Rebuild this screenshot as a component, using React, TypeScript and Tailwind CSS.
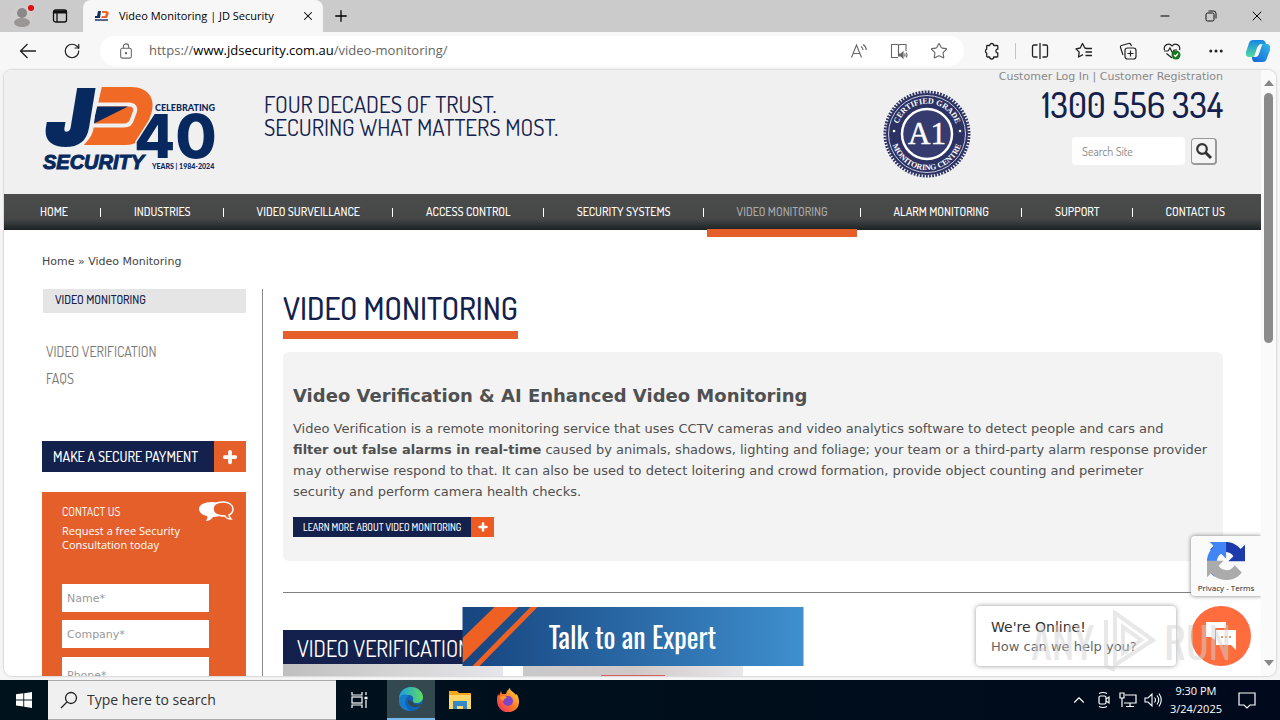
import React from "react";
import { ChevronUp, Ellipsis, Minus, Plus, RotateCw, Star, X } from "lucide-react";

const narrow = "font-['Dosis','Liberation_Sans_Narrow','Roboto_Condensed',sans-serif]";
const poster = "font-['Oswald','Roboto_Condensed','Liberation_Sans_Narrow',sans-serif]";
const verdana = "font-['DejaVu_Sans',sans-serif]";
const segoe = "font-['Open_Sans','Noto_Sans',sans-serif]";

function FavIcon() {
  return (
    <svg viewBox="0 0 14 12" className="h-3 w-3.5" aria-hidden="true">
      <path d="M3 1h3L5 8H0V6h2z" fill="#14305f" />
      <path d="M7 1h5l2 2-2 5H6l1-2h3l1-3H7z" fill="#ee6529" />
      <path d="M0 10h13" stroke="#56668c" strokeWidth="2" />
    </svg>
  );
}

function TabBar() {
  return (
    <div className="flex h-8 shrink-0 bg-[#cbcbcb]">
      <button aria-label="Profile" className="flex w-11 items-center justify-center">
        <svg viewBox="0 0 24 24" className="h-6 w-6">
          <circle cx="12" cy="12" r="11" fill="#d0cdcc" />
          <circle cx="12" cy="9" r="5" fill="#8c8887" />
          <ellipse cx="12" cy="18.500" rx="8" ry="4.500" fill="#9a9696" />
          <circle cx="21" cy="4" r="3" fill="#e00b14" />
        </svg>
      </button>
      <button aria-label="Tab actions" className="flex w-8 items-center justify-center">
        <svg viewBox="0 0 16 16" className="h-4 w-4" fill="none" stroke="#111" strokeWidth="1.3">
          <rect x="1.5" y="2" width="13" height="12" rx="2" />
          <path d="M1.5 4h13" strokeWidth="3" />
          <path d="M5 4v10" />
        </svg>
      </button>
      <div className={`ml-[7px] flex w-60 items-center rounded-t-lg bg-[#f7f7f7] pl-3 pr-2 text-[11px] text-black ${segoe}`}>
        <FavIcon />
        <span className="ml-2.5 whitespace-nowrap">Video Monitoring | JD Security</span>
        <button aria-label="Close tab" className="ml-auto">
          <X className="h-3.5 w-3.5" strokeWidth={1.8} />
        </button>
      </div>
      <button aria-label="New tab" className="flex w-9 items-center justify-center">
        <Plus className="h-[18px] w-[18px]" strokeWidth={1.7} />
      </button>
      <div className="ml-auto flex">
        <button aria-label="Minimize" className="flex w-[46px] items-center justify-center">
          <Minus className="h-3.5 w-3.5" strokeWidth={1.8} />
        </button>
        <button aria-label="Restore" className="flex w-[46px] items-center justify-center">
          <svg viewBox="0 0 12 12" className="h-3 w-3" fill="none" stroke="#111">
            <rect x="1" y="3" width="8" height="8" rx="1.5" />
            <path d="M3.500 1h5a2.500 2.500 0 0 1 2.500 2.500v5" />
          </svg>
        </button>
        <button aria-label="Close window" className="flex w-[46px] items-center justify-center">
          <X className="h-4 w-4" strokeWidth={1.5} />
        </button>
      </div>
    </div>
  );
}

function Toolbar() {
  return (
    <div className={`flex h-[38px] shrink-0 items-center bg-[#f7f7f7] text-[#222] ${segoe}`}>
      <button aria-label="Back" className="ml-4 flex w-6 justify-center">
        <svg viewBox="0 0 18 16" className="h-4 w-[18px]" fill="none" stroke="#222" strokeWidth="1.3">
          <path d="M17 8H1.500M8.500 1l-7 7 7 7" />
        </svg>
      </button>
      <button aria-label="Refresh" className="ml-5 flex w-6 justify-center">
        <RotateCw className="h-[18px] w-[18px]" strokeWidth={1.6} />
      </button>
      <div className="ml-4 flex h-[30px] min-w-0 flex-1 items-center rounded-full bg-white pl-[18px] pr-4 text-[#666]">
        <svg viewBox="0 0 16 18" className="h-4 w-4" fill="none" stroke="#666" strokeWidth="1.2">
          <rect x="2" y="6" width="12" height="11" rx="2" />
          <path d="M5 6V4a3 3 0 0 1 6 0v2" />
          <circle cx="8" cy="11.500" r=".7" fill="#666" />
        </svg>
        <span className="ml-[15px] text-[13px]">
          https://<span className="text-black">www.jdsecurity.com.au</span>/video-monitoring/
        </span>
        <div className="ml-auto flex items-center gap-[22px]">
          <button aria-label="Read aloud">
            <svg viewBox="0 0 18 16" className="h-4 w-[18px]" fill="none" stroke="#666" strokeWidth="1.1">
              <path d="M1.500 14.500 6.500 2l5 12.500M3.200 10.500h6.600M11 3.500a4 4 0 0 1 2 3.500M13 1.500a6.500 6.500 0 0 1 3.300 5.500" />
            </svg>
          </button>
          <button aria-label="Immersive reader">
            <svg viewBox="0 0 18 16" className="h-4 w-[18px]" fill="none" stroke="#666" strokeWidth="1.1">
              <path d="M8 14.500H1.500v-13H7q1 0 1.500 1 .500-1 1.500-1h6V8M8.500 2.500v11" />
              <path d="M9.500 11h1.500l2-2v6l-2-2H9.500z" fill="#666" />
              <path d="M14.500 10.500q1 1.500 0 3M16 9.500q2 2.500 0 5" />
            </svg>
          </button>
          <button aria-label="Add to favorites">
            <Star className="h-[18px] w-[18px]" strokeWidth={1.5} />
          </button>
        </div>
      </div>
      <div className="flex items-center">
        <button aria-label="Extensions" className="ml-[18px]">
          <svg viewBox="0 0 18 18" className="h-[18px] w-[18px]" fill="none" stroke="#222" strokeWidth="1.3" strokeLinejoin="round">
            <path d="M5.500 3.500h2.200a2 2 0 0 1 4 0H15a.8.8 0 0 1 .8.8v2.900h-.6a2 2 0 0 0 0 3.800h.6v3.200a.8.8 0 0 1-.8.8h-3.300a2 2 0 0 1-4 0H5.500a.8.8 0 0 1-.8-.8V11.200a2.200 2.200 0 0 1 0-4V4.300a.8.8 0 0 1 .8-.8z" />
          </svg>
        </button>
        <span className="ml-[15px] h-4 w-px bg-[#c4c4c4]" />
        <button aria-label="Split screen" className="ml-[15px]">
          <svg viewBox="0 0 18 18" className="h-[18px] w-[18px]" fill="none" stroke="#222" strokeWidth="1.3">
            <path d="M6.500 3H3a1.500 1.500 0 0 0-1.500 1.500v9A1.500 1.500 0 0 0 3 15h3.500M11.500 3H15a1.500 1.500 0 0 1 1.500 1.500v9A1.500 1.500 0 0 1 15 15h-3.500M9 1v16" />
          </svg>
        </button>
        <button aria-label="Favorites" className="ml-[26px]">
          <svg viewBox="0 0 18 18" className="h-[18px] w-[18px]" fill="none" stroke="#222" strokeWidth="1.300" strokeLinejoin="round">
            <path d="M12 6.500 9.800 6 7.500 1.500 5.200 6 1 6.800l3.200 3.300L3.500 15 8 12.700M11 6.500h6M10.500 10H17M10.500 13.500H17" />
          </svg>
        </button>
        <button aria-label="Collections" className="ml-[26px]">
          <svg viewBox="0 0 18 18" className="h-[18px] w-[18px]" fill="none" stroke="#222" strokeWidth="1.200">
            <rect x="6" y="6" width="11" height="11" rx="2.500" />
            <path d="M11.500 8.500v6M8.500 11.500h6M4 13 1.500 5.500Q1 4 2.500 3.500l7-2Q11 1 11.800 2.500l.7 1.500" />
          </svg>
        </button>
        <button aria-label="Browser essentials" className="ml-[26px]">
          <svg viewBox="0 0 18 18" className="h-[18px] w-[18px]" fill="none" stroke="#222" strokeWidth="1.200">
            <path d="M1.500 8C0 3 6 0 9 4c3-4 9-1 7.500 4M1 9h4l2-3 2.500 5 1.500-3h3M3.500 11.500 9 16" />
            <circle cx="13" cy="13" r="4.500" fill="#16781e" stroke="none" />
            <path d="m11 13 1.500 1.500 2.500-3" stroke="#fff" />
          </svg>
        </button>
        <button aria-label="Settings and more" className="ml-[26px]">
          <Ellipsis className="h-[18px] w-[18px]" strokeWidth={2} />
        </button>
        <button aria-label="Copilot" className="ml-[21px] mr-2.5">
          <svg viewBox="0 0 24 24" className="h-6 w-6">
            <defs>
              <linearGradient id="copA" x1="0" y1="0" x2="0" y2="1">
                <stop stopColor="#1784e8" />
                <stop offset="1" stopColor="#52dc9c" />
              </linearGradient>
              <linearGradient id="copB" x1="1" y1="0" x2="0" y2="1">
                <stop stopColor="#35b8e8" />
                <stop offset="1" stopColor="#1260d8" />
              </linearGradient>
            </defs>
            <path d="M7 1h9q3 0 4 4h-5q-2 0-3 3l-2 7q-1 3-4 3H3q-4 0-3-5L3 4q1-3 4-3z" fill="url(#copA)" />
            <path d="M17 23H9q-3 0-3-5h3q2 0 3-3l2-7q1-3 4-3h3q4 0 3 6l-3 8q-1 4-4 4z" fill="url(#copB)" />
            <path d="M11 9q1-3 4-3h1l-3 9q-1 3-4 3H8z" fill="#f7f7f7" />
          </svg>
        </button>
      </div>
    </div>
  );
}

function CompanyLogo() {
  return (
    <svg viewBox="0 0 176 86" className="h-[86px] w-[176px]" role="img" aria-label="JD Security, celebrating 40 years">
      <path d="M59 1h30c17 0 24 11 21 24l-6 18c-3 11-10 16-20 16H41c5-4 8-8 10-14z" fill="#f06a25" />
      <path d="M51 18.500h36c5 0 7 3 6 7l-3 8c-1 4-4 6-8 6H47" fill="none" stroke="#f0f0f0" strokeWidth="4" />
      <path d="M54 20.500h32L52 37.500z" fill="#07295f" />
      <path d="M58 0 48 42q-3 12-10 18" fill="none" stroke="#f0f0f0" strokeWidth="4" />
      <text x="5" y="58" fill="#07295f" stroke="#07295f" strokeWidth="4" fontFamily="Inter, sans-serif" fontWeight="900" fontStyle="italic" fontSize="74">
        J
      </text>
      <text x="92" y="72" fill="#07295f" stroke="#f0f0f0" strokeWidth="3" paintOrder="stroke" fontFamily="Inter, sans-serif" fontWeight="800" fontSize="60">
        40
      </text>
      <text x="113" y="25" fill="#07295f" fontFamily="Lato, sans-serif" fontWeight="900" fontSize="9">
        CELEBRATING
      </text>
      <text x="1" y="83" fill="#07295f" fontFamily="Liberation Sans, sans-serif" fontWeight="bold" fontStyle="italic" fontSize="20" stroke="#07295f" strokeWidth="1">
        SECURITY
      </text>
      <text x="110" y="83" fill="#07295f" fontFamily="Lato, sans-serif" fontWeight="900" fontSize="7">
        YEARS | 1984-2024
      </text>
    </svg>
  );
}

function GradeSeal() {
  return (
    <svg viewBox="0 0 88 88" className="h-[88px] w-[88px]" role="img" aria-label="Certified Grade A1 Monitoring Centre">
      <defs>
        <path id="sealTop" d="M13.500 44a30.500 30.500 0 0 1 61 0" />
        <path id="sealBottom" d="M8 44a36 36 0 0 0 72 0" />
      </defs>
      <circle cx="44" cy="44" r="41" fill="#2c3263" />
      <circle cx="44" cy="44" r="42" fill="none" stroke="#2c3263" strokeWidth="3" strokeDasharray="1.800 1.300" />
      <circle cx="44" cy="44" r="38.500" fill="none" stroke="#c9cbe0" strokeWidth="1" />
      <circle cx="44" cy="44" r="25" fill="#353b6e" stroke="#fff" strokeWidth="2.500" />
      <g fill="#fff" fontFamily="Liberation Serif, serif">
        <text fontSize="8" fontWeight="bold" textAnchor="middle">
          <textPath href="#sealTop" startOffset="50%">CERTIFIED GRADE</textPath>
        </text>
        <text fontSize="8" fontWeight="bold" textAnchor="middle">
          <textPath href="#sealBottom" startOffset="50%">MONITORING CENTRE</textPath>
        </text>
        <text x="44" y="54" fontSize="31" textAnchor="middle" stroke="#fff" strokeWidth=".5">A1</text>
      </g>
      <circle cx="11" cy="41" r="1.300" fill="#fff" />
      <circle cx="77" cy="41" r="1.300" fill="#fff" />
    </svg>
  );
}

function SiteHeader() {
  return (
    <header className="flex h-[124px] bg-[#f0f0f0] px-[38px]">
      <a href="#home" className="mt-4">
        <CompanyLogo />
      </a>
      <p className={`ml-[46px] mt-[22px] text-[23px] leading-[23px] text-[#14214d] ${narrow}`}>
        FOUR DECADES OF TRUST.
        <br />
        SECURING WHAT MATTERS MOST.
      </p>
      <div className="ml-auto mt-5">
        <GradeSeal />
      </div>
      <div className="ml-3 flex w-60 flex-col items-end">
        <p className={`whitespace-nowrap text-[11px] leading-3.5 text-[#888] ${verdana}`}>
          <a href="#login">Customer Log In</a> | <a href="#register">Customer Registration</a>
        </p>
        <p className={`text-[35px] font-medium leading-10 text-[#14214d] ${narrow}`}>1300 556 334</p>
        <form className="mr-1.5 mt-[13px] flex items-center gap-1.5">
          <input
            aria-label="Search Site"
            placeholder="Search Site"
            className={`h-7 w-[113px] rounded bg-white px-2.5 text-xs placeholder:text-[#888] ${narrow}`}
          />
          <button
            type="button"
            aria-label="Search"
            className="flex h-[27px] w-[26px] items-center justify-center rounded border border-b-2 border-r-2 border-[#999] bg-[#f4f4f4]"
          >
            <svg viewBox="0 0 18 18" className="h-[18px] w-[18px]" fill="none" stroke="#333">
              <circle cx="7" cy="7" r="4.800" strokeWidth="2.200" />
              <path d="m10.500 10.500 5.500 5.500" strokeWidth="3" />
            </svg>
          </button>
        </form>
      </div>
    </header>
  );
}

const menu = [
  "HOME",
  "INDUSTRIES",
  "VIDEO SURVEILLANCE",
  "ACCESS CONTROL",
  "SECURITY SYSTEMS",
  "VIDEO MONITORING",
  "ALARM MONITORING",
  "SUPPORT",
  "CONTACT US",
];

function MainNav() {
  return (
    <nav className="h-9 bg-linear-to-b from-[#4b4b4b] via-[#454747] via-70% to-[#1c2224] px-9">
      <ul className={`flex h-full items-center justify-between whitespace-nowrap text-xs font-medium text-white ${narrow}`}>
        {menu.map((item, i) => (
          <React.Fragment key={item}>
            {i > 0 && <li aria-hidden="true" className="h-[9px] w-px bg-white" />}
            <li className="relative flex h-full items-center">
              <a href="#menu" className={item === "VIDEO MONITORING" ? "text-[#aaa]" : ""}>
                {item}
              </a>
              {item === "VIDEO MONITORING" && (
                <span className="absolute -bottom-[7px] -left-[30px] -right-[30px] h-2 bg-[#e55f2b]" />
              )}
            </li>
          </React.Fragment>
        ))}
      </ul>
    </nav>
  );
}

function Sidebar() {
  const field = `block w-[147px] bg-white px-[5px] text-[11px] placeholder:text-[#999] ${verdana}`;
  return (
    <aside className="w-[204px] shrink-0">
      <h2 className={`ml-px h-6 bg-[#e5e5e5] pl-3 text-xs font-medium leading-[22px] text-[#14214d] ${narrow}`}>VIDEO MONITORING</h2>
      <ul className={`ml-1 mt-[25px] text-sm leading-[27px] text-[#777] ${narrow}`}>
        <li>
          <a href="#verification">VIDEO VERIFICATION</a>
        </li>
        <li>
          <a href="#faqs">FAQS</a>
        </li>
      </ul>
      <a href="#payment" className={`mt-[49px] flex h-[31px] text-sm font-medium text-white ${narrow}`}>
        <span className="flex flex-1 items-center bg-[#14214d] pl-[11px]">MAKE A SECURE PAYMENT</span>
        <span className="flex w-8 items-center justify-center bg-[#e55f2b]">
          <Plus className="h-[18px] w-[18px]" strokeWidth={5} />
        </span>
      </a>
      <section className="mt-5 h-[400px] bg-[#e55f2b] px-5 pt-3 text-white">
        <div className="flex justify-between">
          <h3 className={`text-xs leading-4 ${narrow}`}>CONTACT US</h3>
          <svg viewBox="0 0 36 22" className="-mr-2 -mt-1 h-[22px] w-9" aria-hidden="true">
            <path d="M14 2c8 0 13 3 13 7.500S22 17 15 17c-2 3-5 4-7 4 1-2 2-3 1-5-5-1-8-4-8-7 0-4 5-7 13-7z" fill="#fff" />
            <path d="M25 2c6 0 10 3 10 7 0 3-2 5-4 6 0 2 1 3 2 4-3 0-5-1-6-3-7 0-12-2-12-7s4-7 10-7z" fill="#e55f2b" stroke="#fff" strokeWidth="1.500" />
          </svg>
        </div>
        <p className={`mt-0.5 whitespace-nowrap text-[11px] leading-3.5 ${segoe}`}>
          Request a free Security
          <br />
          Consultation today
        </p>
        <form className="mt-8 flex flex-col gap-2">
          <input aria-label="Name" placeholder="Name*" className={`${field} h-7`} />
          <input aria-label="Company" placeholder="Company*" className={`${field} h-7`} />
          <input aria-label="Phone" placeholder="Phone*" className={`${field} mt-px h-9`} />
        </form>
      </section>
    </aside>
  );
}

function ServiceCards() {
  return (
    <div className="mt-[37px] flex gap-5">
      <article className="w-[220px]">
        <h2 className={`h-[34px] overflow-hidden whitespace-nowrap bg-[#14214d] pl-3.5 text-[22px] leading-9 text-white ${narrow}`}>
          VIDEO VERIFICATION
        </h2>
        <div className="h-32 bg-linear-to-r from-[#bfbfbf] via-[#d4d4d4] to-[#e6e6ea]" />
      </article>
      <article className="w-[220px]">
        <div className="h-[34px] bg-[#14214d]" />
        <div className="h-32 bg-linear-to-r from-[#c8c8ca] via-[#cfc8c8] to-[#e8e8ea] pt-[11px]">
          <div className="mx-auto h-4 w-16 bg-[#d8605c]" />
        </div>
      </article>
    </div>
  );
}

function MainContent() {
  return (
    <main className="min-w-0 flex-1 border-l border-[#8a8a8a] pl-5">
      <h1 className={`inline-block h-[50px] border-b-8 border-[#e55f2b] align-top text-[31px] font-medium leading-[38px] text-[#14214d] ${narrow}`}>
        VIDEO MONITORING
      </h1>
      <section className={`mt-[13px] rounded-md bg-[#f3f3f3] px-2.5 pb-6 pt-8 text-[#505050] ${verdana}`}>
        <h2 className="text-lg font-bold leading-6">Video Verification &amp; AI Enhanced Video Monitoring</h2>
        <p className="mt-2.5 text-[13px] leading-[21px]">
          Video Verification is a remote monitoring service that uses CCTV cameras and video analytics software to detect
          people and cars and
          <br />
          <strong>filter out false alarms in real-time</strong> caused by animals, shadows, lighting and foliage; your team
          or a third-party alarm response provider
          <br />
          may otherwise respond to that. It can also be used to detect loitering and crowd formation, provide object
          counting and perimeter
          <br />
          security and perform camera health checks.
        </p>
        <a href="#learn" className={`mt-[15px] flex h-5 w-[201px] whitespace-nowrap text-[10px] font-medium text-white ${narrow}`}>
          <span className="flex flex-1 items-center bg-[#14214d] pl-2.5">LEARN MORE ABOUT VIDEO MONITORING</span>
          <span className="flex w-[23px] items-center justify-center bg-[#ed5b22]">
            <Plus className="h-3 w-3" strokeWidth={5} />
          </span>
        </a>
      </section>
      <hr className="mt-[31px] border-[#808080]" />
      <ServiceCards />
    </main>
  );
}

function ScrollBar() {
  return (
    <div className="flex w-[15px] shrink-0 flex-col items-center bg-[#fafafa] py-2.5" aria-hidden="true">
      <svg viewBox="0 0 10 6" className="h-1.5 w-2.5">
        <path d="M0 6 5 0l5 6z" fill="#888" />
      </svg>
      <div className="mt-[7px] h-[250px] w-[9px] rounded-full bg-[#8b8b8b]" />
      <svg viewBox="0 0 10 6" className="mt-auto h-1.5 w-2.5">
        <path d="M0 0h10L5 6z" fill="#888" />
      </svg>
    </div>
  );
}

function Overlays() {
  return (
    <>
      <a
        href="#expert"
        className="absolute bottom-2.5 left-1/2 flex h-[59px] w-[341px] -translate-x-1/2 items-center justify-center bg-linear-to-r from-[#17457f] to-[#3f8fce]"
      >
        <svg viewBox="0 0 80 59" className="absolute left-0 top-0 h-[59px] w-20" aria-hidden="true">
          <path d="M0 31 32 0h24L0 56zM10 59 68 0h7L17 59z" fill="#ee6122" />
        </svg>
        <span className={`text-[28px] text-white ${poster}`}>Talk to an Expert</span>
      </a>
      <div className="absolute bottom-20 right-0 flex h-[60px] w-[70px] flex-col items-center rounded-l-sm bg-[#fafafa] pt-1.5 shadow-[0_0_4px_#777]">
        <svg viewBox="0 0 64 64" className="h-[38px] w-[38px] shrink-0" aria-hidden="true">
          <path
            d="M64 31.955a33 33 0 0 0-.013-.912V4.596l-7.312 7.312C50.69 4.583 41.586-.083 31.391-.083c-10.609 0-20.035 5.063-25.967 12.903l11.985 12.111c1.175-2.172 2.843-4.038 4.863-5.453 2.101-1.64 5.078-2.98 9.119-2.98.488 0 .865.057 1.142.164 5.007.395 9.346 3.158 11.902 7.168l-8.484 8.484c10.746-.042 22.885-.067 28.037.006"
            fill="#1c3aa9"
          />
          <path
            d="M31.862.094a33 33 0 0 0-.912.013H4.503l7.312 7.312C4.49 13.405-.176 22.509-.176 32.704c0 10.609 5.063 20.035 12.903 25.967l12.111-11.985c-2.172-1.175-4.038-2.843-5.453-4.863-1.64-2.101-2.98-5.078-2.98-9.119 0-.488.057-.865.164-1.142.395-5.007 3.158-9.346 7.168-11.902l8.484 8.484c-.042-10.746-.067-22.885.006-28.037"
            fill="#4285f4"
          />
          <path
            d="M.001 32.045q0 .459.013.912v26.447l7.312-7.312c5.985 7.325 15.089 11.991 25.284 11.991 10.609 0 20.035-5.063 25.967-12.903L46.592 39.069c-1.175 2.172-2.843 4.038-4.863 5.453-2.101 1.64-5.078 2.98-9.119 2.98-.488 0-.865-.057-1.142-.164-5.007-.395-9.346-3.158-11.902-7.168l8.484-8.484c-10.746.042-22.885.067-28.037-.006"
            fill="#ababab"
          />
        </svg>
        <p className={`mt-0.5 whitespace-nowrap text-[8px] leading-3 text-[#222] ${segoe}`}>
          <a href="#privacy">Privacy</a> - <a href="#terms">Terms</a>
        </p>
      </div>
      <div className={`absolute bottom-2.5 right-[85px] h-[60px] w-[200px] rounded bg-white pl-[15px] pt-[11px] shadow-[0_0_5px_#999] ${verdana}`}>
        <p className="text-sm leading-5 text-[#333]">We&apos;re Online!</p>
        <p className="text-[13px] leading-[19px] text-[#666]">How can we help you?</p>
      </div>
      <button
        aria-label="Open chat"
        className="absolute bottom-2.5 right-2.5 flex h-[60px] w-[60px] items-center justify-center rounded-full bg-[#ff6c3d]"
      >
        <svg viewBox="0 0 32 30" className="h-[30px] w-8">
          <path d="M1 1h20v6H10v12l-4-3H1z" fill="#fff" />
          <path d="M11 9h20v20l-5-5H11z" fill="#fff" />
          <path d="M16 16h2m2 0h2m2 0h2" stroke="#e8956f" strokeWidth="2" />
        </svg>
      </button>
      <div className={`pointer-events-none absolute bottom-1 right-[30px] flex items-center gap-2 text-[42px] leading-[60px] text-[#d2d2d2]/50 ${poster}`}>
        <span>ANY</span>
        <svg viewBox="0 0 54 62" className="h-[62px] w-[54px]" fill="none" stroke="currentColor" strokeWidth="4" aria-hidden="true">
          <path d="M13 3 51 30 13 55zM4 10v46l9 4M21 17v26l18-13z" />
        </svg>
        <span>RUN</span>
      </div>
    </>
  );
}

function Taskbar() {
  return (
    <footer className={`flex h-10 shrink-0 items-center bg-linear-to-r from-[#00131c] to-[#000a1c] text-white ${segoe}`}>
      <button aria-label="Start" className="flex w-12 justify-center">
        <svg viewBox="0 0 16 16" className="h-4 w-4" fill="#fff">
          <path d="M0 2.300 7.300 1.300v6.200H0zM8.200 1.200 16 0v7.500H8.200zM0 8.400h7.300v6.200L0 13.600zM8.200 8.400H16V16l-7.800-1.200z" />
        </svg>
      </button>
      <label className="flex h-full w-72 items-center border-y border-[#aaa] bg-[#f0f0f0] pl-3">
        <svg viewBox="0 0 18 18" className="h-[18px] w-[18px]" fill="none" stroke="#222" strokeWidth="1.300">
          <circle cx="11" cy="7" r="5.500" />
          <path d="M7 11 1 17" />
        </svg>
        <input
          aria-label="Type here to search"
          placeholder="Type here to search"
          className="ml-[9px] w-56 bg-transparent text-sm placeholder:text-[#333]"
        />
      </label>
      <button aria-label="Task view" className="flex w-[51px] justify-center pr-1">
        <svg viewBox="0 0 18 16" className="h-4 w-[18px]" fill="none" stroke="#fff" strokeWidth="1.200">
          <path d="M1 0v3h10V0M1 16v-3h10v3M15 0v3M15 8v8" />
          <rect x="1" y="5" width="10" height="6" />
          <path d="M13.500 6h3" strokeWidth="2.500" />
        </svg>
      </button>
      <button aria-label="Microsoft Edge" className="flex h-full w-12 items-center justify-center border-b-2 border-[#76b9ed] bg-[#33484f]">
        <svg viewBox="0 0 24 24" className="h-6 w-6">
          <defs>
            <linearGradient id="edgeTop" x1="0" y1="0" x2="1" y2="0">
              <stop stopColor="#1d9de2" />
              <stop offset="1" stopColor="#5edc60" />
            </linearGradient>
          </defs>
          <circle cx="12" cy="12" r="12" fill="#0f63b8" />
          <path d="M0 12C0 5 5 0 12 0s12 5 12 10c0 4-3 6-7 6-3 0-4-1-3-3 1-3-1-5-5-5-5 0-9 3-9 8z" fill="url(#edgeTop)" />
          <path d="M9 12c-1 6 4 10 12 7q2 0 1-2c-4 2-8 0-8-3-1 1-4 0-5-2z" fill="#33484f" />
          <path d="M9 9c-5 5-3 12 3 15C3 24-1 18 0 12c1-4 6-6 9-3z" fill="#177cc9" />
        </svg>
      </button>
      <button aria-label="File Explorer" className="flex w-[49px] justify-center">
        <svg viewBox="0 0 22 20" className="h-5 w-[22px]">
          <path d="M0 1h8l2 2h12v16H0z" fill="#f5a81c" />
          <path d="M0 5h22v14H0z" fill="#ffd768" />
          <path d="M4 19v-8h14v8h-4v-3H8v3z" fill="#3388c8" />
        </svg>
      </button>
      <button aria-label="Firefox" className="flex w-12 justify-center">
        <svg viewBox="0 0 24 24" className="h-6 w-6">
          <defs>
            <linearGradient id="fox" x1="1" y1="0" x2="0" y2="1">
              <stop stopColor="#ffe246" />
              <stop offset=".5" stopColor="#ff7a25" />
              <stop offset="1" stopColor="#f0256c" />
            </linearGradient>
          </defs>
          <path d="M14 0c0 3 4 4 6 7q1-1 0-2c6 8 3 19-8 19C3 24-1 15 2 6l1 2 2-5 1 3h4q1-4 4-6z" fill="url(#fox)" />
          <circle cx="12" cy="13" r="5" fill="#8045c8" />
          <path d="M4 9c3-2 6-1 7 1-2 0-3 1-4 3-1-1-3-2-3-4z" fill="#ff9b25" />
        </svg>
      </button>
      <div className="ml-auto flex items-center">
        <ChevronUp className="h-[18px] w-[18px]" strokeWidth={1.5} />
        <svg viewBox="0 0 14 18" className="ml-[9px] h-[18px] w-3.5" fill="none" stroke="#fff" strokeWidth="1.200">
          <rect x="2" y="5" width="7" height="8" rx="1.500" />
          <path d="M9 8l3-2v6l-3-2M2 2.500q4-2 8 0M2 15.500q4 2 8 0" />
        </svg>
        <svg viewBox="0 0 18 16" className="ml-2 h-4 w-[18px]" fill="none" stroke="#fff" strokeWidth="1.200">
          <path d="M6 3h11v8H5M11 11v3M7 14.500h8M3 6v9M1 1h4v5H1z" />
        </svg>
        <svg viewBox="0 0 18 16" className="ml-[7px] h-4 w-[18px]" fill="none" stroke="#fff" strokeWidth="1.100">
          <path d="M1 6h3l4-4v12l-4-4H1zM10.500 5.500q2 2.500 0 5M13 3.500q3.500 4.500 0 9M15 1.500q4.500 6.500 0 13" />
        </svg>
        <p className="ml-2 whitespace-nowrap text-center text-[11px] leading-[18px]">
          9:30 PM
          <br />
          3/24/2025
        </p>
        <button aria-label="Notifications" className="ml-4 mr-6">
          <svg viewBox="0 0 18 17" className="h-[17px] w-[18px]" fill="none" stroke="#fff" strokeWidth="1.200">
            <path d="M1 1h16v12h-5l-3 3-3-3H1z" />
          </svg>
        </button>
      </div>
    </footer>
  );
}

export default function App() {
  return (
    <div className="flex h-screen flex-col overflow-hidden bg-[#f5f5f5]">
      <TabBar />
      <Toolbar />
      <div className="mx-1 mb-1 flex min-h-0 flex-1 overflow-hidden rounded-lg shadow-[0_0_2px_#999]">
        <div className="relative min-w-0 flex-1 overflow-hidden bg-white">
          <SiteHeader />
          <MainNav />
          <div className="px-[38px]">
            <p className={`mt-[23px] text-[11px] leading-[18px] text-[#444] ${verdana}`}>
              <a href="#home">Home</a> » <a href="#monitoring">Video Monitoring</a>
            </p>
            <div className="mt-[18px] flex gap-4">
              <Sidebar />
              <MainContent />
            </div>
          </div>
          <Overlays />
        </div>
        <ScrollBar />
      </div>
      <Taskbar />
    </div>
  );
}
